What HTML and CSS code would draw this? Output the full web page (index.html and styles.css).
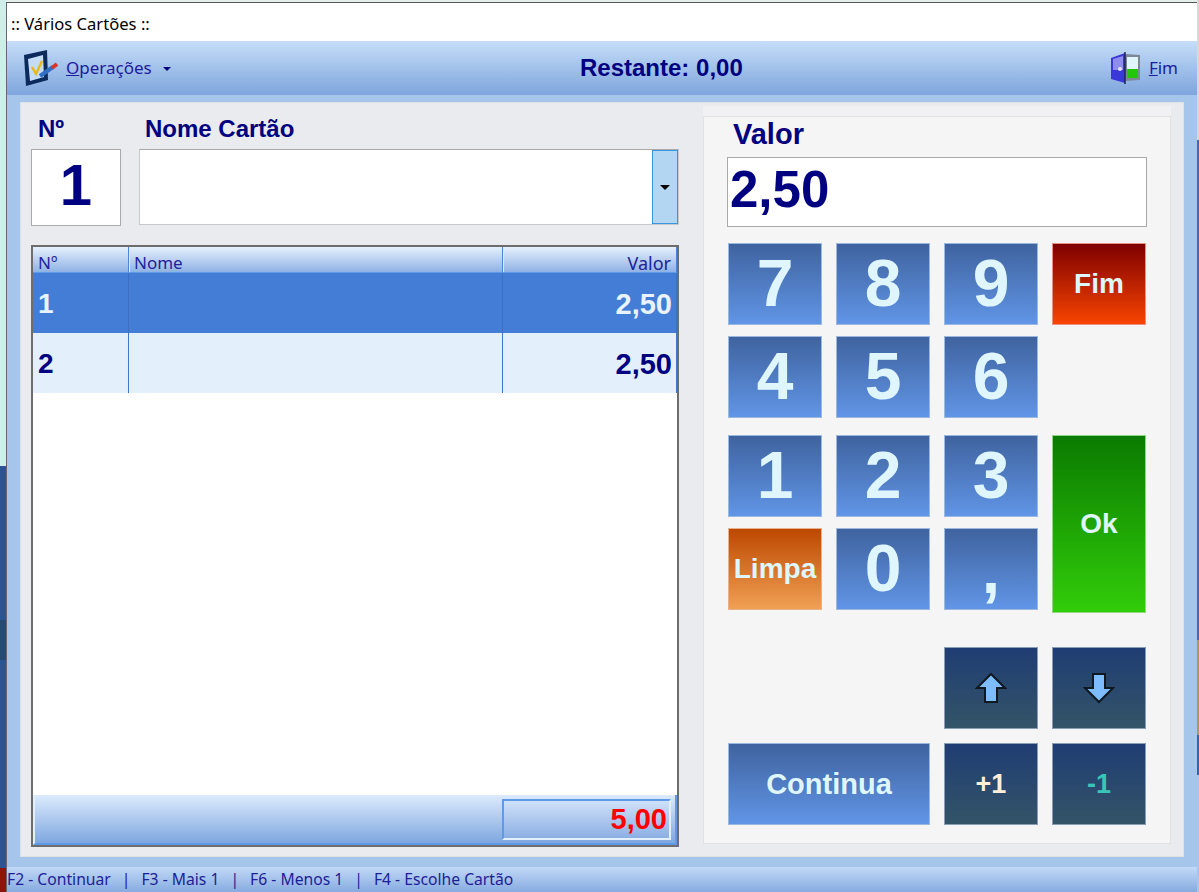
FILE: index.html
```html
<!DOCTYPE html>
<html lang="pt">
<head>
	<meta charset="utf-8">
	<title>Vários Cartões</title>
	<link rel="stylesheet" href="styles.css">
</head>
<body>
<div class="desk-left"></div>
<div class="window">
	<div class="titlebar">:: Vários Cartões ::</div>

	<div class="toolbar">
		<div class="tool tool-start">
			<svg class="icon" width="35" height="36" viewBox="0 0 35 36">
				<path d="M1 5 L24 0 L25 30 L3 36 Z" fill="#0d2a5c"/>
				<path d="M5 9 L20 5 L21 27 L7 31 Z" fill="#c4dcf6"/>
				<path d="M9 17 L13 24 L19 11" fill="none" stroke="#e8b818" stroke-width="2.4"/>
				<path d="M17 26 L30 17" stroke="#2f6fc4" stroke-width="4"/>
				<path d="M29 18 L34 14" stroke="#d8352a" stroke-width="4"/>
			</svg>
			<span class="tool-text"><u>O</u>perações</span>
			<span class="caret"></span>
		</div>
		<div class="restante">Restante: 0,00</div>
		<div class="tool tool-end">
			<svg class="icon" width="31" height="34" viewBox="0 0 31 34">
				<path d="M15 3 L30 4 L30 29 L15 30 Z" fill="#7d8798"/>
				<rect x="17" y="6" width="11" height="12" fill="#dff5fa"/>
				<rect x="17" y="18" width="11" height="9" fill="#22c70a"/>
				<path d="M1 7 L15 2 L15 32 L1 28 Z" fill="#3a38d8"/>
				<path d="M3 8 L13 5 L13 19 L3 19 Z" fill="#8f8cf0"/>
				<circle cx="10" cy="18" r="2" fill="#e6e0ff"/>
				<path d="M15 1 L15 33" stroke="#20264a" stroke-width="1.5"/>
			</svg>
			<span class="tool-text"><u>F</u>im</span>
		</div>
	</div>

	<div class="frame">
		<div class="panel">
			<div class="left">
				<div class="fields">
					<div class="field-num">
						<div class="label">Nº</div>
						<div class="num-box">1</div>
					</div>
					<div class="field-name">
						<div class="label">Nome Cartão</div>
						<div class="combo">
							<div class="combo-btn"><span class="combo-caret"></span></div>
						</div>
					</div>
				</div>

				<div class="grid">
					<div class="grid-row grid-head">
						<div class="c-num">Nº</div>
						<div class="c-name">Nome</div>
						<div class="c-val">Valor</div>
					</div>
					<div class="grid-row grid-data selected">
						<div class="c-num">1</div>
						<div class="c-name"></div>
						<div class="c-val">2,50</div>
					</div>
					<div class="grid-row grid-data">
						<div class="c-num">2</div>
						<div class="c-name"></div>
						<div class="c-val">2,50</div>
					</div>
					<div class="grid-empty"></div>
					<div class="grid-foot">
						<div class="total">5,00</div>
					</div>
				</div>
			</div>

			<div class="right">
				<div class="right-top"></div>
				<div class="right-box">
					<div class="valor-label">Valor</div>
					<div class="valor-box">2,50</div>

					<div class="pad pad-a">
						<div class="key">7</div>
						<div class="key">8</div>
						<div class="key">9</div>
						<div class="key key-fim">Fim</div>
						<div class="key">4</div>
						<div class="key">5</div>
						<div class="key">6</div>
					</div>

					<div class="pad pad-b">
						<div class="key">1</div>
						<div class="key">2</div>
						<div class="key">3</div>
						<div class="key key-ok">Ok</div>
						<div class="key key-limpa">Limpa</div>
						<div class="key">0</div>
						<div class="key key-comma">,</div>
					</div>

					<div class="pad pad-c">
						<div class="key key-dark col-3">
							<svg width="32" height="32" viewBox="0 0 32 32"><path d="M16 2 L30 16 L22 16 L22 30 L10 30 L10 16 L2 16 Z" fill="#7dbcff" stroke="#101820" stroke-width="2"/></svg>
						</div>
						<div class="key key-dark">
							<svg width="32" height="32" viewBox="0 0 32 32"><path d="M16 30 L30 16 L22 16 L22 2 L10 2 L10 16 L2 16 Z" fill="#7dbcff" stroke="#101820" stroke-width="2"/></svg>
						</div>
						<div class="key key-continua">Continua</div>
						<div class="key key-dark key-plus">+1</div>
						<div class="key key-dark key-minus">-1</div>
					</div>
				</div>
			</div>
		</div>
	</div>

	<div class="statusbar">F2 - Continuar<span class="sep">|</span>F3 - Mais 1<span class="sep">|</span>F6 - Menos 1<span class="sep">|</span>F4 - Escolhe Cartão</div>
</div>
<div class="desk-right"></div>
</body>
</html>
```

FILE: styles.css
```css
html, body {
    margin: 0;
    height: 892px;
    overflow: hidden;
}
body {
    display: flex;
    width: 1199px;
    font-family: "Liberation Sans", Arial, sans-serif;
    color: #000080;
    background: #e4eeec;
}
.desk-left {
    width: 6px;
    flex: none;
    background: linear-gradient(#cfeee8 0, #cfeee8 466px, #2c5590 466px, #2c5590 620px, #2a4a6e 620px, #2a4a6e 660px, #2c5590 660px, #2c5590 868px, #8f1308 868px);
}
.desk-right {
    width: 2px;
    flex: none;
    background: linear-gradient(#d8d8d8 0, #d8d8d8 140px, #4a66a8 140px, #4a66a8 640px, #b8925a 640px, #b8925a 735px, #3a62a8 735px, #3a62a8 775px, #a6c5eb 775px);
}
.window {
    flex: 1;
    display: flex;
    flex-direction: column;
    height: 890px;
    margin-top: 2px;
    background: #a6c5eb;
    border-top: 1px solid #555;
    border-left: 1px solid #667;
}

/* title + toolbar */
.titlebar {
    height: 38px;
    flex: none;
    line-height: 41px;
    padding-left: 4px;
    background: #fff;
    color: #000;
    font-family: "Noto Sans", sans-serif;
    font-size: 16.6px;
}
.toolbar {
    height: 54px;
    flex: none;
    display: flex;
    align-items: center;
    padding: 0 19px 0 16px;
    background: linear-gradient(#c6def9, #7ea5dc);
}
.tool {
    display: flex;
    align-items: center;
}
.tool-start {
    width: 557px;
}
.tool-end {
    margin-left: auto;
}
.icon {
    margin-right: 8px;
}
.tool-text {
    padding-bottom: 2px;
    font-family: "Noto Sans", sans-serif;
    font-size: 17px;
    color: #1c1c9c;
}
.caret {
    margin-left: 11px;
    margin-top: 2px;
    border-left: 4px solid transparent;
    border-right: 4px solid transparent;
    border-top: 4px solid #000080;
}
.restante {
    font-size: 24px;
    font-weight: bold;
}

/* main panel */
.frame {
    flex: 1;
    padding: 7px 13px 10px 13px;
}
.panel {
    height: 100%;
    box-sizing: border-box;
    display: flex;
    justify-content: space-between;
    padding: 3px 12px 9px 10px;
    background: #e9ebef;
    border: 1px solid #dfe1e4;
}
.left {
    width: 648px;
    display: flex;
    flex-direction: column;
}
.fields {
    display: flex;
    gap: 18px;
}
.label {
    height: 43px;
    line-height: 46px;
    font-size: 24px;
    font-weight: bold;
}
.field-num .label {
    padding-left: 7px;
}
.field-name {
    flex: 1;
}
.field-name .label {
    padding-left: 6px;
}
.num-box {
    width: 90px;
    height: 77px;
    box-sizing: border-box;
    border: 1px solid #aaa;
    background: #fff;
    text-align: center;
    font-size: 58px;
    font-weight: bold;
    line-height: 70px;
}
.combo {
    height: 76px;
    box-sizing: border-box;
    display: flex;
    justify-content: flex-end;
    background: #fff;
    border: 1px solid #c8c8c8;
    border-top-color: #aaa;
}
.combo-btn {
    width: 26px;
    box-sizing: border-box;
    display: flex;
    align-items: center;
    justify-content: center;
    background: #b3d7f3;
    border: 1px solid #3a96dd;
}
.combo-caret {
    border-left: 5px solid transparent;
    border-right: 5px solid transparent;
    border-top: 5px solid #000;
}

/* list */
.grid {
    margin-top: 19px;
    flex: 1;
    display: flex;
    flex-direction: column;
    background: #fff;
    border: 2px solid #6d6d6d;
}
.grid-row {
    display: flex;
    flex: none;
}
.c-num {
    width: 95px;
    flex: none;
    box-sizing: border-box;
    padding-left: 5px;
}
.c-name {
    width: 374px;
    flex: none;
    box-sizing: border-box;
    padding-left: 5px;
    border-left: 1px solid #4a86d8;
}
.c-val {
    flex: 1;
    box-sizing: border-box;
    padding-right: 5px;
    text-align: right;
    border-left: 1px solid #4a86d8;
    border-right: 1px solid #4a86d8;
}
.grid-head {
    height: 26px;
    font-family: "Noto Sans", sans-serif;
    font-size: 17px;
    line-height: 32px;
    color: #22229a;
    background: linear-gradient(#e6f0fd, #8fb2e4);
    border-bottom: 1px solid #5f9ae6;
    box-sizing: border-box;
}
.grid-head .c-name,
.grid-head .c-val {
    border-left: 1px solid #4a86d8;
    box-shadow: inset 1px 0 0 #dbeafc;
}
.grid-head .c-val {
    font-size: 18px;
}
.grid-data {
    height: 60px;
    line-height: 62px;
    font-size: 28px;
    font-weight: bold;
    background: #e4effc;
}
.grid-data .c-val {
    font-size: 29px;
    padding-right: 4px;
}
.grid-data .c-name,
.grid-data .c-val {
    border-color: #3f78c8;
}
.selected {
    background: #447dd6;
    color: #e8f3ff;
}
.selected .c-name,
.selected .c-val {
    border-color: #3c70c0;
}
.grid-empty {
    flex: 1;
}
.grid-foot {
    height: 50px;
    flex: none;
    box-sizing: border-box;
    display: flex;
    justify-content: flex-end;
    padding: 4px 4px 3px 0;
    background: linear-gradient(#dcebfd, #7fa7df);
    border-left: 2px solid #e4effc;
    border-right: 2px solid #5f9ae6;
    border-bottom: 2px solid #5f9ae6;
}
.total {
    width: 169px;
    box-sizing: border-box;
    border: 2px solid #e4effc;
    border-top-color: #5f9ae6;
    border-left-color: #5f9ae6;
    background: linear-gradient(#cfe1f9, #8cafe3);
    color: #f00;
    font-size: 29px;
    font-weight: bold;
    line-height: 37px;
    text-align: right;
    padding-right: 2px;
}

/* right side */
.right {
    width: 468px;
    display: flex;
    flex-direction: column;
    margin-bottom: 3px;
}
.right-top {
    height: 10px;
    background: #f1f1f3;
    flex: none;
}
.right-box {
    flex: 1;
    box-sizing: border-box;
    padding: 0 24px;
    background: #f5f5f5;
    border: 1px solid #e2e2e2;
}
.valor-label {
    height: 40px;
    line-height: 34px;
    padding-left: 5px;
    font-size: 29px;
    font-weight: bold;
}
.valor-box {
    width: 420px;
    height: 70px;
    margin-left: -1px;
    box-sizing: border-box;
    border: 1px solid #aaa;
    background: #fff;
    font-size: 51px;
    font-weight: bold;
    line-height: 64px;
    padding-left: 2px;
}
.pad {
    display: grid;
    grid-template-columns: repeat(4, 94px);
    grid-auto-rows: 82px;
    column-gap: 14px;
}
.pad-a {
    margin-top: 16px;
    row-gap: 11px;
}
.pad-b {
    margin-top: 17px;
    row-gap: 11px;
}
.pad-c {
    margin-top: 37px;
    row-gap: 14px;
}
.key {
    box-sizing: border-box;
    display: flex;
    align-items: center;
    justify-content: center;
    padding-bottom: 2px;
    border: 1px solid #9db8de;
    background: linear-gradient(#3f639f, #6195e6);
    color: #dff6ff;
    font-size: 66px;
    font-weight: bold;
}
.key-fim {
    padding-bottom: 0;
    background: linear-gradient(#7e0000, #f84400);
    border-color: #eb8f80;
    font-size: 28px;
}
.key-ok {
    padding-bottom: 0;
    grid-column: 4;
    grid-row: 1 / span 2;
    height: 178px;
    background: linear-gradient(#0a7a00, #32cd0a);
    border-color: #8fd67f;
    font-size: 28px;
}
.key-limpa {
    padding-bottom: 0;
    background: linear-gradient(#bd4800, #f0a054);
    border-color: #e8b188;
    font-size: 28px;
}
.key-comma {
    align-items: flex-start;
    line-height: 82px;
}
.key-continua {
    padding-bottom: 0;
    grid-column: 1 / span 2;
    font-size: 29px;
}
.col-3 {
    grid-column: 3;
}
.key-dark {
    padding-bottom: 0;
    background: linear-gradient(#1f3d73, #345468);
    border-color: #8a9cb4;
    font-size: 27px;
}
.key-plus {
    color: #ffeedd;
}
.key-minus {
    color: #38c6b8;
}

/* status bar */
.statusbar {
    height: 26px;
    flex: none;
    box-sizing: border-box;
    line-height: 24px;
    background: linear-gradient(#c2d9f7, #84a9df);
    font-family: "Noto Sans", sans-serif;
    font-size: 15.7px;
    color: #1e1e96;
    white-space: nowrap;
}
.sep {
    margin: 0 11px;
}
```
